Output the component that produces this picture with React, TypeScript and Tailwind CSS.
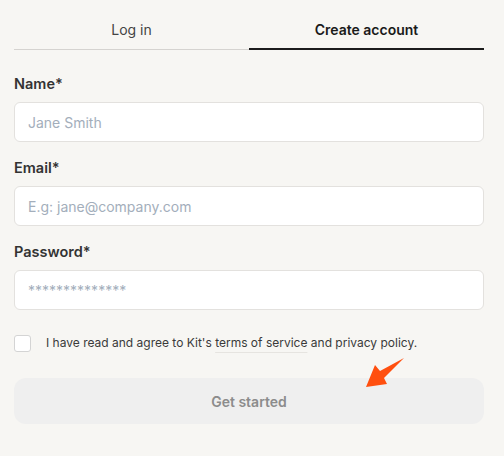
import React from "react"

function Field({ label, placeholder, type = "text" }: { label: string; placeholder: string; type?: string }) {
    return (
        <div className="flex flex-col gap-2">
            <label className="text-[14.5px] leading-5 font-semibold text-[#333333]">
                {label}
                <span className="text-[#333333]">*</span>
            </label>
            <input
                type={type}
                placeholder={placeholder}
                className="h-10 w-full rounded-[6px] border border-[#e3e1de] bg-white px-[13px] text-[14px] text-[#333] placeholder:text-[#a3aebb] outline-none"
            />
        </div>
    )
}

export default function App() {
    return (
        <div
            className="relative min-h-screen bg-[#f7f6f3] pl-[14px] pr-[20px]"
            style={{ fontFamily: "Inter, 'Noto Sans', sans-serif" }}
        >
            {/* tabs */}
            <div className="flex items-end">
                <button className="flex-1 border-b border-[#d5d3d0] pt-[20px] pb-[9px] text-[14px] leading-5 text-[#444444]">
                    Log in
                </button>
                <button className="flex-1 border-b-2 border-[#1c1c1c] pt-[20px] pb-[8px] text-[14px] leading-5 font-semibold text-[#1a1a1a]">
                    Create account
                </button>
            </div>

            <form className="mt-6 flex flex-col gap-4">
                <Field label="Name" placeholder="Jane Smith" />
                <Field label="Email" placeholder="E.g: jane@company.com" />
                <Field label="Password" placeholder="**************" />
            </form>

            <label className="mt-6 flex items-center gap-[15px] text-[12px] text-[#3a3a3a]">
                <span className="h-[17px] w-[17px] shrink-0 rounded-[3px] border border-[#d4d4d4] bg-white" />
                <span>
                    I have read and agree to Kit's{" "}
                    <span className="underline decoration-[#e6e4e0] underline-offset-[5px]">terms of service</span> and
                    privacy policy.
                </span>
            </label>

            <button className="mt-[26px] h-[46px] w-full rounded-[12px] bg-[#efefef] text-[14px] font-semibold text-[#8c8c8c]">
                Get started
            </button>

            {/* pointer arrow */}
            <svg className="absolute left-[360px] top-[352px]" width="50" height="40" viewBox="0 0 50 40">
                <polygon points="6,35 15,13 20,19 44,6 24,26 27,32" fill="#ff4f0f" />
            </svg>
        </div>
    )
}
